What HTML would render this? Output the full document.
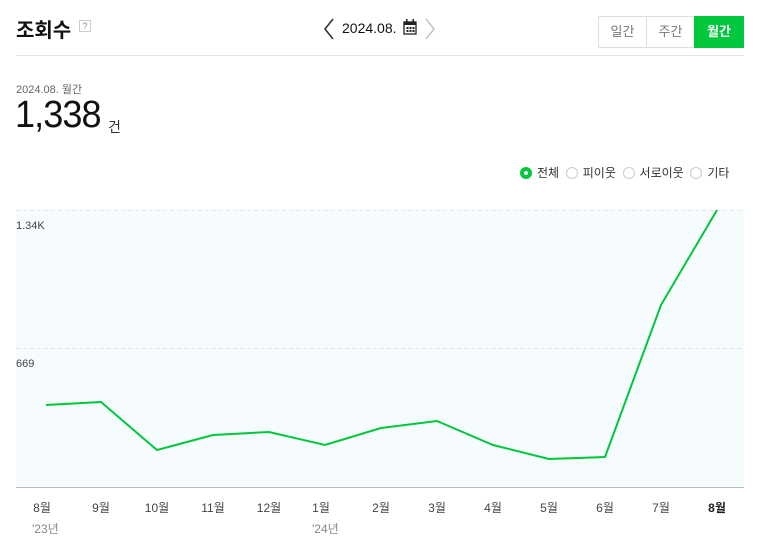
<!DOCTYPE html>
<html><head><meta charset="utf-8"><style>
body{margin:0;width:764px;height:559px;background:#fff;font-family:"Liberation Sans","Noto Sans CJK KR",sans-serif;position:relative;overflow:hidden;color:#000}
.a{position:absolute;white-space:nowrap}
.btn{position:absolute;top:16px;height:30px;width:47px;border:1px solid #ddd;font-size:13px;color:#777;text-align:center;line-height:30px;box-sizing:content-box}
.r{display:inline-block;width:12px;height:12px;border:1px solid #ccc;border-radius:50%;vertical-align:-2px;margin-right:5px;box-sizing:border-box}
.m{position:absolute;top:499px;font-size:12px;color:#444;width:40px;text-align:center}
</style></head><body>
<div class="a" style="left:16px;top:14px;font-size:20px;font-weight:bold;color:#111">조회수</div>
<div class="a" style="left:79px;top:20px;width:10px;height:10px;border:1px solid #ccc;font-size:9px;color:#888;text-align:center;line-height:10px">?</div>
<svg class="a" style="left:322px;top:17px" width="14" height="24"><path d="M11 2 L3 12 L11 22" fill="none" stroke="#333" stroke-width="1.6"/></svg>
<div class="a" style="left:342px;top:20px;font-size:14px;color:#111">2024.08.</div>
<svg class="a" style="left:403px;top:19px" width="14" height="16"><rect x="1" y="3" width="12" height="12" fill="none" stroke="#222" stroke-width="1.3"/><rect x="1" y="3" width="12" height="3" fill="#222"/><rect x="3" y="0" width="1.5" height="4" fill="#222"/><rect x="9.5" y="0" width="1.5" height="4" fill="#222"/><g fill="#222"><rect x="3.5" y="8" width="2" height="2"/><rect x="6.5" y="8" width="2" height="2"/><rect x="9.5" y="8" width="2" height="2"/><rect x="3.5" y="11" width="2" height="2"/><rect x="6.5" y="11" width="2" height="2"/><rect x="9.5" y="11" width="2" height="2"/></g></svg>
<svg class="a" style="left:423px;top:17px" width="14" height="24"><path d="M3 2 L11 12 L3 22" fill="none" stroke="#bbb" stroke-width="1.4"/></svg>
<div class="btn" style="left:598px">일간</div>
<div class="btn" style="left:646px">주간</div>
<div class="btn" style="left:694px;width:48px;background:#00c73c;border-color:#00c73c;color:#fff;font-weight:bold">월간</div>
<div class="a" style="left:16px;top:55px;width:728px;height:1px;background:#e3e3e3"></div>
<div class="a" style="left:16px;top:81px;font-size:11px;color:#666">2024.08. 월간</div>
<div class="a" style="left:15px;top:94px;font-size:38px;color:#111;letter-spacing:-1px;transform:scaleX(0.95);transform-origin:left">1,338</div>
<div class="a" style="left:108px;top:117px;font-size:14px;color:#333">건</div>
<div class="a" style="left:520px;top:164px;font-size:12px;color:#333"><span class="r" style="border:4px solid #00c73c;background:#fff"></span>전체 &nbsp;<span class="r"></span>피이웃 &nbsp;<span class="r"></span>서로이웃 &nbsp;<span class="r"></span>기타</div>
<svg class="a" style="left:0;top:200px" width="764" height="300">
<rect x="16" y="10" width="728" height="277" fill="#f6fbfe"/>
<line x1="16" y1="10.5" x2="744" y2="10.5" stroke="#dde6ee" stroke-dasharray="4 3"/>
<line x1="16" y1="148.5" x2="744" y2="148.5" stroke="#dde6ee" stroke-dasharray="4 3"/>
<line x1="16" y1="287.5" x2="744" y2="287.5" stroke="#bbb"/>
<polyline fill="none" stroke="#00c73c" stroke-width="2" points="46,205 101,202 157,250 213,235 269,232 325,245 381,228 437,221 493,245 549,259 605,257 661,105 717,10"/>
<text x="16" y="29" font-size="11" fill="#444" font-family="Liberation Sans">1.34K</text>
<text x="16" y="167" font-size="11" fill="#444" font-family="Liberation Sans">669</text>
</svg>
<div class="m" style="left:22px">8월</div><div class="m" style="left:81px">9월</div><div class="m" style="left:137px">10월</div><div class="m" style="left:193px">11월</div><div class="m" style="left:249px">12월</div><div class="m" style="left:301px">1월</div><div class="m" style="left:361px">2월</div><div class="m" style="left:417px">3월</div><div class="m" style="left:473px">4월</div><div class="m" style="left:529px">5월</div><div class="m" style="left:585px">6월</div><div class="m" style="left:641px">7월</div><div class="m" style="left:697px;font-weight:bold;color:#222">8월</div>
<div class="a" style="left:32px;top:520px;font-size:12px;color:#888">'23년</div>
<div class="a" style="left:312px;top:520px;font-size:12px;color:#888">'24년</div>
</body></html>
